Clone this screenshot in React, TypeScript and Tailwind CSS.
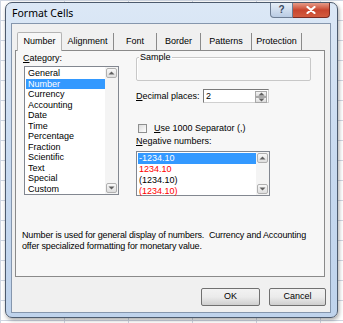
import React from "react";

const ui = { fontFamily: '"Liberation Sans", Arial, sans-serif' };

const tabs = [
  { label: "Number", w: "w-[45px]" },
  { label: "Alignment", w: "w-[52px]" },
  { label: "Font", w: "w-[43px]" },
  { label: "Border", w: "w-[44px]" },
  { label: "Patterns", w: "w-[51px]" },
  { label: "Protection", w: "w-[50px]" },
];

const categories = [
  "General",
  "Number",
  "Currency",
  "Accounting",
  "Date",
  "Time",
  "Percentage",
  "Fraction",
  "Scientific",
  "Text",
  "Special",
  "Custom",
];

const negatives = [
  { text: "-1234.10", red: false },
  { text: "1234.10", red: true },
  { text: "(1234.10)", red: false },
  { text: "(1234.10)", red: true },
];

const Arrow = ({ up }: { up?: boolean }) => (
  <svg width="7" height="4" viewBox="0 0 7 4">
    {up ? (
      <path d="M0.5 3.5 L3.5 0.5 L6.5 3.5 Z" fill="#606060" />
    ) : (
      <path d="M0.5 0.5 L3.5 3.5 L6.5 0.5 Z" fill="#606060" />
    )}
  </svg>
);

const ScrollButton = ({ up }: { up?: boolean }) => (
  <div className="h-[10px] w-full border border-[#b0b0b0] rounded-[2px] bg-gradient-to-b from-[#f8f8f8] to-[#dedede] flex items-center justify-center">
    <Arrow up={up} />
  </div>
);

const ScrollBar = () => (
  <div className="w-[13px] h-full flex flex-col justify-between p-[1px] bg-[#f4f4f4]">
    <ScrollButton up />
    <ScrollButton />
  </div>
);

const App = () => {
  return (
    <div
      className="w-[343px] h-[323px] overflow-hidden bg-white bg-[linear-gradient(#cfd6e2_1px,transparent_1px),linear-gradient(90deg,#cfd6e2_1px,transparent_1px)] bg-[size:64px_20px] pt-[2px] pl-[5px]"
      style={ui}
    >
      {/* window frame */}
      <div className="w-[333px] h-[316px] rounded-[7px] border border-[#4d5b6e] bg-gradient-to-b from-[#dce8f6] via-[#c8daf0] to-[#bfd3ec] shadow-[1px_2px_4px_rgba(0,0,0,0.35)] flex flex-col">
        {/* title bar */}
        <div className="h-[20px] flex items-start">
          <div
            className="pl-[6px] pt-[4px] text-[10.5px] text-black leading-[13px] flex-1"
            style={{ fontFamily: '"Noto Sans", "Open Sans", sans-serif' }}
          >
            Format Cells
          </div>
          <div className="flex mr-[7px]">
            <div className="w-[23px] h-[15px] border border-[#6d7d93] border-t-0 rounded-bl-[4px] bg-gradient-to-b from-[#e6eef8] to-[#b9cbe3] flex items-center justify-center text-[10px] font-bold text-[#3b4a60] leading-none">
              ?
            </div>
            <div className="w-[37px] h-[15px] border border-[#7a2a22] border-t-0 border-l-0 rounded-br-[4px] bg-gradient-to-b from-[#e59a87] via-[#c8452e] to-[#d25b3f] flex items-center justify-center">
              <svg width="10" height="8" viewBox="0 0 10 8">
                <path
                  d="M1.5 1 L8.5 7 M8.5 1 L1.5 7"
                  stroke="#ffffff"
                  strokeWidth="2.2"
                  strokeLinecap="round"
                />
              </svg>
            </div>
          </div>
        </div>

        {/* client area */}
        <div className="ml-[5px] w-[320px] h-[290px] border border-[#8596ad] bg-[#f0f0f0] pl-[3px] pt-[7px] flex flex-col">
          {/* tabs */}
          <div className="flex items-end h-[19px] pl-[2px]">
            {tabs.map((t, i) =>
              i === 0 ? (
                <div
                  key={t.label}
                  className={`${t.w} h-[19px] border border-b-0 border-[#b4b4b4] rounded-t-[2px] bg-[#f7f7f7] -mb-[1px] relative z-10 flex items-center justify-center text-[9px] text-black whitespace-nowrap`}
                >
                  {t.label}
                </div>
              ) : (
                <div
                  key={t.label}
                  className={`${t.w} h-[17px] border-r border-[#8a8a8a] flex items-center justify-center text-[9px] text-black whitespace-nowrap`}
                >
                  {t.label}
                </div>
              )
            )}
          </div>

          {/* tab panel */}
          <div className="w-[310px] h-[227px] border border-[#8a8a8a] bg-[#f7f7f7] text-[9px] text-black leading-[11px] whitespace-nowrap overflow-hidden">
            <div className="flex">
              {/* left column */}
              <div className="pl-[7px] pt-[2px] w-[120px]">
                <div className="h-[13px]">
                  <span className="underline">C</span>ategory:
                </div>
                <div className="ml-[1px] w-[95px] h-[129px] border border-[#828790] bg-white flex">
                  <div className="flex-1 pt-[1px] pl-[1px]">
                    {categories.map((c) =>
                      c === "Number" ? (
                        <div
                          key={c}
                          className="h-[10.5px] leading-[10.5px] bg-[#3399ff] text-white pl-[2px]"
                        >
                          {c}
                        </div>
                      ) : (
                        <div key={c} className="h-[10.5px] leading-[10.5px] pl-[2px]">
                          {c}
                        </div>
                      )
                    )}
                  </div>
                  <ScrollBar />
                </div>
              </div>

              {/* right column */}
              <div className="pt-[6px] w-[180px]">
                <div className="relative w-[175px] h-[24px] border border-[#c8c8c8] rounded-[2px] shadow-[inset_1px_1px_0_#ffffff]">
                  <span className="absolute -top-[6px] left-[2px] px-[1px] bg-[#f7f7f7] leading-[11px]">
                    Sample
                  </span>
                </div>

                <div className="flex items-center mt-[8px] h-[14px]">
                  <div className="w-[67px]">
                    <span className="underline">D</span>ecimal places:
                  </div>
                  <div className="w-[66px] h-[14px] border border-[#7a7a7a] border-r-[#d0d0d0] border-b-[#d0d0d0] bg-white flex">
                    <div className="flex-1 pl-[2px] leading-[12px]">2</div>
                    <div className="w-[14px] flex flex-col p-[1px]">
                      <div className="flex-1 border border-[#a8a8a8] bg-gradient-to-b from-[#f6f6f6] to-[#dcdcdc] flex items-center justify-center">
                        <Arrow up />
                      </div>
                      <div className="flex-1 border border-[#a8a8a8] bg-gradient-to-b from-[#f6f6f6] to-[#dcdcdc] flex items-center justify-center">
                        <Arrow />
                      </div>
                    </div>
                  </div>
                </div>

                <div className="flex items-center mt-[20px] h-[11px] pl-[2px]">
                  <div className="w-[9px] h-[9px] border border-[#8e8f8f] bg-gradient-to-br from-[#dcdcdc] to-white mr-[7px]" />
                  <div>
                    <span className="underline">U</span>se 1000 Separator (,)
                  </div>
                </div>

                <div className="mt-[2px] h-[11px] leading-[11px]">
                  <span className="underline">N</span>egative numbers:
                </div>

                <div className="mt-[4px] w-[134px] h-[45px] border border-[#828790] bg-white flex">
                  <div className="flex-1 pt-[1px] pl-[1px]">
                    {negatives.map((n, i) => (
                      <div
                        key={i}
                        className={
                          i === 0
                            ? "h-[10.5px] leading-[10.5px] bg-[#3399ff] text-white pl-[1px]"
                            : n.red
                            ? "h-[11px] leading-[11px] text-[#ff0000] pl-[1px]"
                            : "h-[11px] leading-[11px] pl-[1px]"
                        }
                      >
                        {n.text}
                      </div>
                    ))}
                  </div>
                  <ScrollBar />
                </div>
              </div>
            </div>

            <div className="mt-[34px] pl-[6px] leading-[11px] tracking-[-0.15px]">
              <div>Number is used for general display of numbers.&nbsp; Currency and Accounting</div>
              <div>offer specialized formatting for monetary value.</div>
            </div>
          </div>

          {/* buttons */}
          <div className="flex justify-end gap-[9px] pr-[4px] mt-[11px]">
            <div className="w-[59px] h-[18px] border border-[#707070] rounded-[2px] bg-gradient-to-b from-[#f2f2f2] via-[#ebebeb] to-[#cfcfcf] flex items-center justify-center text-[9px] text-black">
              OK
            </div>
            <div className="w-[57px] h-[18px] border border-[#707070] rounded-[2px] bg-gradient-to-b from-[#f2f2f2] via-[#ebebeb] to-[#cfcfcf] flex items-center justify-center text-[9px] text-black">
              Cancel
            </div>
          </div>
        </div>
      </div>
    </div>
  );
};

export default App;
